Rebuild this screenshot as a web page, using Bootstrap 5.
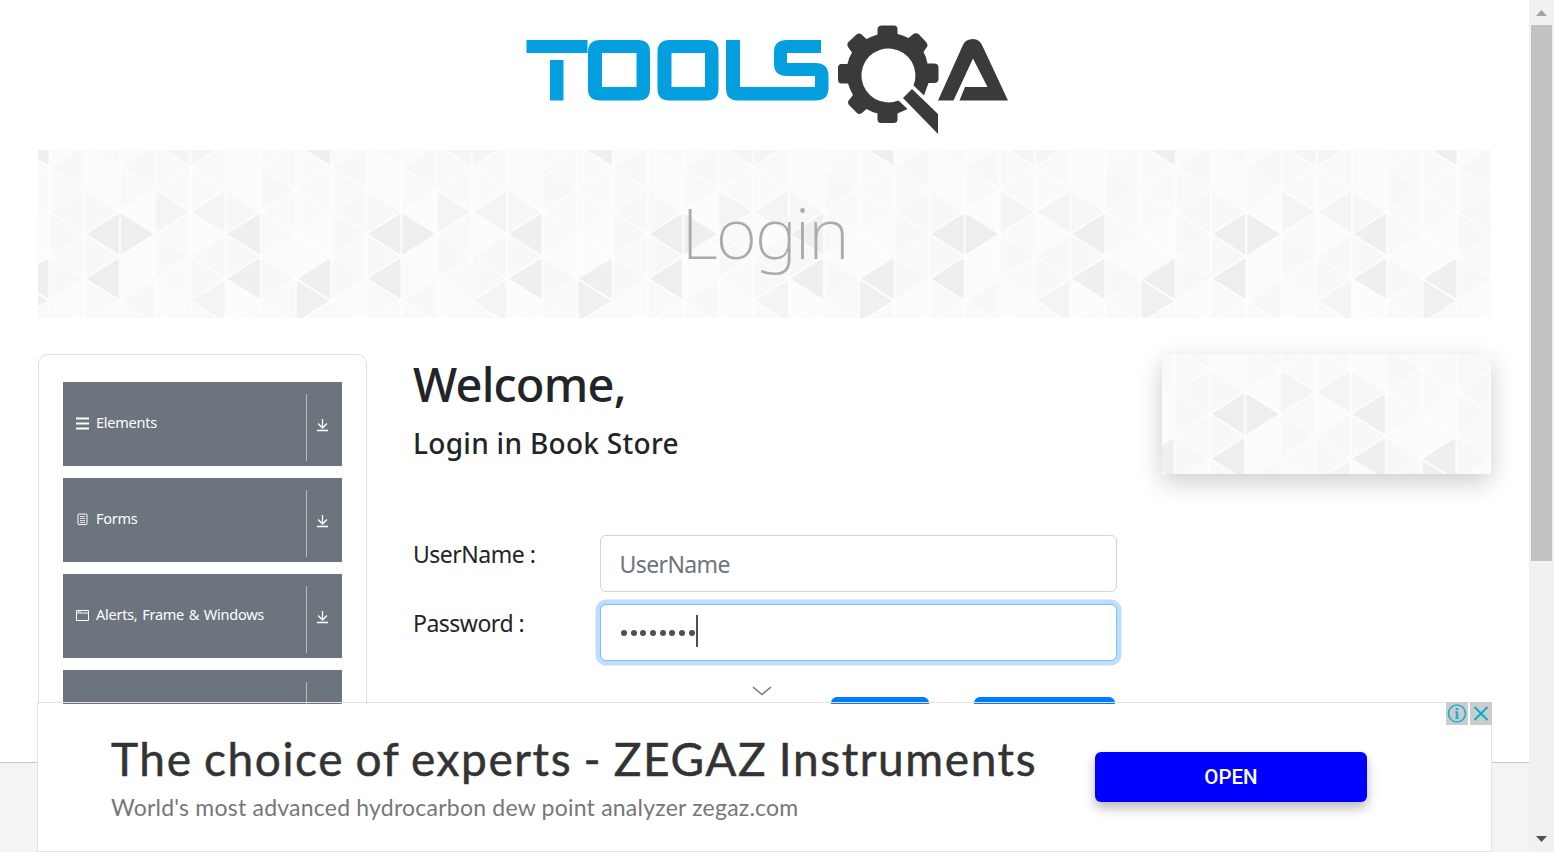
<!DOCTYPE html>
<html lang="en">
<head>
<meta charset="utf-8">
<meta name="viewport" content="width=device-width, initial-scale=1">
<title>Login</title>
<link href="https://cdn.jsdelivr.net/npm/bootstrap@5.3.0/dist/css/bootstrap.min.css" rel="stylesheet">
<style>
html,body{height:100%;overflow:hidden}
body{font-family:"Noto Sans","Open Sans",sans-serif;color:#212529;background:#fff}
.page-area{height:852px;overflow:hidden}
.page-body{height:762px;padding:0 38px}
.logo-bar{height:150px}
.banner{height:168px;margin-bottom:36px}
.banner h1{font-family:"Noto Sans",sans-serif;font-weight:250;font-size:71px;color:#aaa;line-height:1;letter-spacing:-2px;padding-bottom:6px}
.columns{gap:46px;height:408px}
.side{width:329px;flex:none}
.side-menu{border:1px solid #dfdfdf;border-radius:10px;padding:27px 24px;height:408px;overflow:hidden}
.menu-item{height:84px;margin-bottom:12px;background:#6c757d;color:#fff;font-size:14.5px;padding:12px 13px;flex:none}
.menu-item .title{line-height:20px;padding-top:18px;letter-spacing:-.25px;word-spacing:1.2px}
.menu-item .title svg{margin:1px 7px 0 0}
.menu-item .arrow{width:23px;height:67px;border-left:1px solid #bbb;padding:24px 0 0 9px}
.promo{height:120px;box-shadow:0 8px 24px rgba(0,0,0,.2)}
.login{width:703px;flex:none}
.login h2{font-size:47px;font-weight:500;line-height:56px;margin:2px 0 0;letter-spacing:-.8px}
.login h5{font-size:28px;font-weight:500;line-height:34px;margin:14px 0 75px;letter-spacing:.3px}
.login label{width:187px;font-size:23px;line-height:28px;padding-top:5px;flex:none;letter-spacing:-.5px}
.field{height:57px;margin-bottom:12px}
.field .form-control{height:57px;font-size:23px;border:1px solid #ced4da;border-radius:6px;padding:10.500px 18.5px 9.500px;width:517px;color:#495057}
.field .form-control::placeholder{color:#6c757d;letter-spacing:-.6px}
.field .active-box{border-color:#80bdff;box-shadow:0 0 0 4.5px #bfdeff}
.dots{gap:3.74px;height:35px;padding-left:1.3px}
.dots i{width:6px;height:6px;border-radius:50%;background:#495057}
.caret{width:2px;height:32px;background:#495057;margin-left:-2.9px;margin-top:-4px}
.action{height:57px;background:#007bff;border-radius:6px;border:0}
.foot{height:90px;background:#f4f4f4;border-top:1px solid #c8c8c8}
.ad{left:37px;top:702px;width:1455px;height:150px;border:1px solid #e3e3e3;padding-top:1px}
.ad-inner{background:#fff;padding-left:73px;font-family:Lato,sans-serif}
.ad-title{font-size:46px;line-height:54px;color:#333;white-space:nowrap;letter-spacing:1.6px;word-spacing:-2px;-webkit-text-stroke:.5px #333}
.ad-sub{font-size:23px;line-height:30px;color:#777;white-space:nowrap;letter-spacing:.22px;padding-top:6px}
.ad-open{width:272px;height:50px;background:#00f;color:#fff;border-radius:6px;font:500 20.5px Roboto,sans-serif;box-shadow:0 6px 12px rgba(0,0,0,.28);left:1057px;top:49px}
.ad-marks{right:-1px;top:-1px;gap:2px}
.ad-marks svg{background:#ccc;display:block}
.chevron{left:752px;top:685px}
.scroll-track{width:25px;background:#f1f1f1;height:852px}
.scroll-thumb{width:21px;height:536px;background:#c1c1c1}
</style>
</head>
<body class="d-flex">
<div class="page-area flex-grow-1 position-relative">
  <main class="page-body">
    <header class="logo-bar">
      <svg class="d-block" width="1453" height="150" viewBox="38 0 1453 150" role="img" aria-label="TOOLSQA">
        <g fill="#039fdf">
          <path d="M526.500 40h61v13h-61zM550 60h13.500v40.500H550z"/>
          <path fill-rule="evenodd" d="M600 40h38q12 0 12 12v37q0 11.500-12 11.500h-38q-12 0-12-11.500V52q0-12 12-12zm2 13v34h34.500V53z"/>
          <path fill-rule="evenodd" d="M669.500 40h37q12 0 12 12v37q0 11.500-12 11.500h-37q-12 0-12-11.500V52q0-12 12-12zm2 13v34H705V53z"/>
          <path d="M726 40h14v47h75V76h-28q-13 0-13-12V52q0-12 13-12h34v13h-34v10h28q13.500 0 13.500 13v12q0 12.500-13 12.500H738q-12 0-12-12z"/>
        </g>
        <g fill="#3a3a3a">
          <path fill-rule="evenodd" d="M882 25.500h12q3.500 0 3.500 3.500v5q5 1 11 4l5.500-4.500q3-1 5 1l7.500 8q2 3 0 5l-3 4.500q3 5 4 11.500h6.500q4.500 0 4.500 4v11.500q0 4-4.500 4h-5.500l-4.500 12.500-10.500-10a27 27 0 1 0-15 15l9 8.500-10 4.500v6q0 3.500-4 3.500h-12q-4 0-4-3.500v-6q-6-1.500-11-4.500l-4.500 4q-3 2-5 0l-8-8q-2-2.500 0-5l4-5q-3-5-5-11.500h-6.500q-3.500 0-3.500-4.500V67.500q0-3.500 3.500-3.500h6q1-6 4.500-11.500l-4-5.500q-1.500-3 .5-5l8-7.500q3-2 5 0l5 4.500q5-2.500 11-4.500v-5q0-4 4.500-4z"/>
          <path d="m912 89 26 25v20l-35-36z"/>
          <path d="M938 100.500 962.500 46q2.500-7 10.500-7 6.500 0 9.500 7l25.500 54.500H959.500l5.500-13.500H987.500L973 58.500 953.500 100.500z"/>
        </g>
      </svg>
    </header>
    <section class="banner position-relative">
      <svg class="d-block" width="100%" height="168">
        <defs><pattern id="triangles" x="-116.600" y="-100" width="281.600" height="200" patternUnits="userSpaceOnUse"></pattern></defs>
        <svg x="50%" y="50%" overflow="visible"><rect x="-800" y="-100" width="1600" height="200" fill="url(#triangles)"/></svg>
      </svg>
      <div class="position-absolute top-0 start-0 w-100 h-100 d-flex justify-content-center align-items-center"><h1 class="m-0">Login</h1></div>
    </section>
    <div class="columns d-flex">
      <aside class="side">
        <nav class="side-menu d-flex flex-column">
          <div class="menu-item d-flex"><div class="title flex-grow-1 d-flex"><svg width="13" height="20" stroke="#fff" stroke-width="2"><path d="M0 5.500h13M0 10.500h13M0 15.500h13"/></svg>Elements</div><div class="arrow"><svg class="d-block" width="13" height="14" fill="none" stroke="#fff" stroke-width="1.300"><path d="M6.500 1v9M2 5.500l4.500 4.500L11 5.500M1 12.500h11"/></svg></div></div>
          <div class="menu-item d-flex"><div class="title flex-grow-1 d-flex"><svg width="13" height="20" fill="none" stroke="#fff"><rect x="2" y="5" width="9" height="10.600" rx="1"/><path d="M4 7.500h5M4 9.500h5M4 11.500h5M4 13.500h5" stroke-width=".8"/></svg>Forms</div><div class="arrow"><svg class="d-block" width="13" height="14" fill="none" stroke="#fff" stroke-width="1.300"><path d="M6.500 1v9M2 5.500l4.500 4.500L11 5.500M1 12.500h11"/></svg></div></div>
          <div class="menu-item d-flex"><div class="title flex-grow-1 d-flex"><svg width="13" height="20" fill="none" stroke="#fff"><path d="M.5 5.500h12v10H.5zM.5 8h12"/><path d="M2 6.700h3" stroke-dasharray="1 .6"/></svg>Alerts, Frame &amp; Windows</div><div class="arrow"><svg class="d-block" width="13" height="14" fill="none" stroke="#fff" stroke-width="1.300"><path d="M6.500 1v9M2 5.500l4.500 4.500L11 5.500M1 12.500h11"/></svg></div></div>
          <div class="menu-item d-flex"><div class="title flex-grow-1"></div><div class="arrow"></div></div>
        </nav>
      </aside>
      <section class="login">
        <h2>Welcome,</h2>
        <h5>Login in Book Store</h5>
        <div class="field d-flex"><label for="user">UserName :</label><input id="user" class="form-control flex-shrink-0" placeholder="UserName"></div>
        <div class="field d-flex"><label>Password :</label><div class="form-control active-box flex-shrink-0"><div class="dots d-flex align-items-center"><i></i><i></i><i></i><i></i><i></i><i></i><i></i><i></i><span class="caret"></span></div></div></div>
        <div class="d-flex justify-content-end pt-4"><button class="action login-btn" style="width:98px" aria-label="Login"></button><button class="action" style="width:141px;margin-left:45px;margin-right:1px" aria-label="New User"></button></div>
      </section>
      <aside class="side"><div class="promo"><svg class="d-block" width="100%" height="120"><svg x="50%" y="50%" overflow="visible"><rect x="-800" y="-100" width="1600" height="200" fill="url(#triangles)"/></svg></svg></div></aside>
    </div>
  </main>
  <footer class="foot"></footer>
  <svg class="chevron position-absolute" width="20" height="12" fill="none" stroke="#777" stroke-width="1.500"><path d="m1 2 9 7.500L19 2"/></svg>
  <div class="ad position-absolute">
    <div class="ad-inner h-100">
      <div class="ad-title"><span class="d-inline-block pt-4 mt-1">The choice of experts - ZEGAZ Instruments</span></div>
      <div class="ad-sub"><span>World's most advanced hydrocarbon dew point analyzer zegaz.com</span></div>
    </div>
    <button class="ad-open border-0 position-absolute">OPEN</button>
    <div class="ad-marks position-absolute d-flex">
      <svg width="22" height="23" fill="none" stroke="#1eb2cf"><circle cx="11" cy="11.500" r="8.500" stroke-width="1.700"/><path d="M11 6v2.300M11 9.500V17" stroke-width="2.500"/><path d="M9 10h2M9 16.500h4"/></svg>
      <svg width="22" height="23" fill="none" stroke="#00aecd" stroke-width="1.900"><path d="m4.500 5 13 13M17.500 5l-13 13"/></svg>
    </div>
  </div>
</div>
<div class="scroll-track flex-shrink-0 d-flex flex-column align-items-center">
  <svg width="25" height="25" fill="#a3a3a3"><path d="M7 16h11l-5.500-6z"/></svg>
  <div class="scroll-thumb"></div>
  <svg class="mt-auto" width="25" height="25" fill="#505050"><path d="M7 9h11l-5.500 6z"/></svg>
</div>
<script src="https://cdn.jsdelivr.net/npm/bootstrap@5.3.0/dist/js/bootstrap.bundle.min.js"></script>
<script>
// Shades for each strip of the triangular texture, from the top down.
const shades = [
  'f9 fb fb f8 ee f8 ee f9 f9','fb f8 f9 fc ee fc fb f8 f9','f5 f9 f9 f4 f9 f8 fa fb fa',
  'f5 f9 fa f4 fc f8 f8 f4 f9','fb fb fb f7 ef f8 ef fc fb','fa f9 f8 f9 f9 fb f8 f9 f9',
  'ef fa f9 fa fc fc ef f0 f9','fb f8 f9 f8 f8 f9 f8 fb fa'];
const w = 35.2, h = 22.3, mid = 100;
let art = '', lines = '';
shades.forEach((row, k) => row.split(' ').forEach((c, i) => {
  const j = i - 4, y = mid + j * h, left = (k + j) % 2 === 0;
  const a = left ? k * w : (k + 1) * w, b = left ? (k + 1) * w : k * w;
  const d = `M${a} ${y}L${b} ${y - h}V${y + h}Z`;
  art += `<path d="${d}" fill="#${c}${c}${c}"/>`;
  lines += d;
}));
document.getElementById('triangles').innerHTML = '<rect width="282" height="200" fill="#f9f9f9"/>' + art +
  `<path d="${lines}" fill="none" stroke="#fdfdfd" stroke-width="2"/>`;
</script>
</body>
</html>
